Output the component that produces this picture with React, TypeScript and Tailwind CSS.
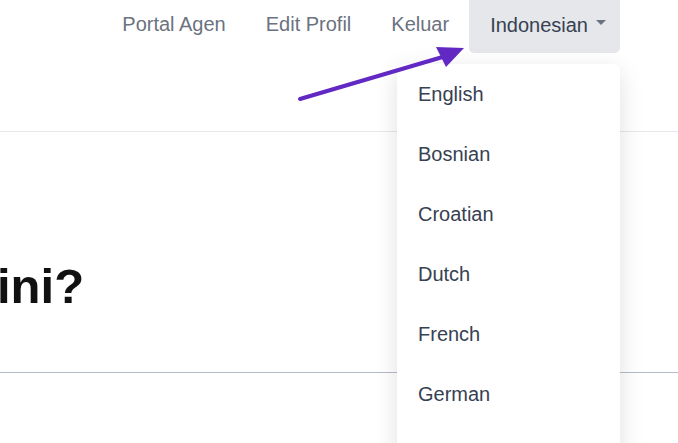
import React from 'react';

const languages = ['English', 'Bosnian', 'Croatian', 'Dutch', 'French', 'German'];

const App: React.FC = () => {
  return (
    <div className="relative w-[678px] h-[443px] overflow-hidden bg-white font-['Liberation_Sans',Arial,sans-serif]">
      {/* Top header */}
      <header className="h-[132px] border-b border-[#e5e7eb]">
        <nav className="flex justify-end items-start pr-[58px] text-[20px]">
          <a className="px-5 h-[47px] flex items-center text-[#6b7280]">Portal Agen</a>
          <a className="px-5 h-[47px] flex items-center text-[#6b7280]">Edit Profil</a>
          <a className="px-5 h-[47px] flex items-center text-[#6b7280]">Keluar</a>
          <button className="h-[53px] pl-[21px] pr-[14px] flex items-start pt-[10px] bg-[#e5e7eb] rounded-b-[5px] text-[#374151]">
            Indonesian
            <span className="ml-[8px] mt-[10px] w-0 h-0 border-l-[5px] border-r-[5px] border-t-[5px] border-l-transparent border-r-transparent border-t-[#6b7280]" />
          </button>
        </nav>
      </header>

      {/* Page content */}
      <main>
        <h1 className="mt-[126px] -ml-[3px] text-[49px] leading-[56px] font-bold text-[#111111]">ini?</h1>
        <div className="mt-[58px] h-px bg-[#b6bcc4] w-full" />
      </main>

      {/* Language dropdown */}
      <div className="absolute left-[397px] top-[64px] w-[223px] h-[400px] bg-white rounded-[6px] shadow-[0_6px_24px_rgba(0,0,0,0.12)]">
        {languages.map((lang) => (
          <div key={lang} className="h-[60px] flex items-center px-[21px] text-[20px] text-[#374151]">
            {lang}
          </div>
        ))}
      </div>

      {/* Annotation arrow */}
      <svg className="absolute left-0 top-0" width="678" height="443" viewBox="0 0 678 443">
        <line x1="300" y1="99" x2="446" y2="56" stroke="#6228c4" strokeWidth="4" strokeLinecap="round" />
        <polygon points="464,48 436,47 446,67" fill="#6228c4" />
      </svg>
    </div>
  );
};

export default App;
